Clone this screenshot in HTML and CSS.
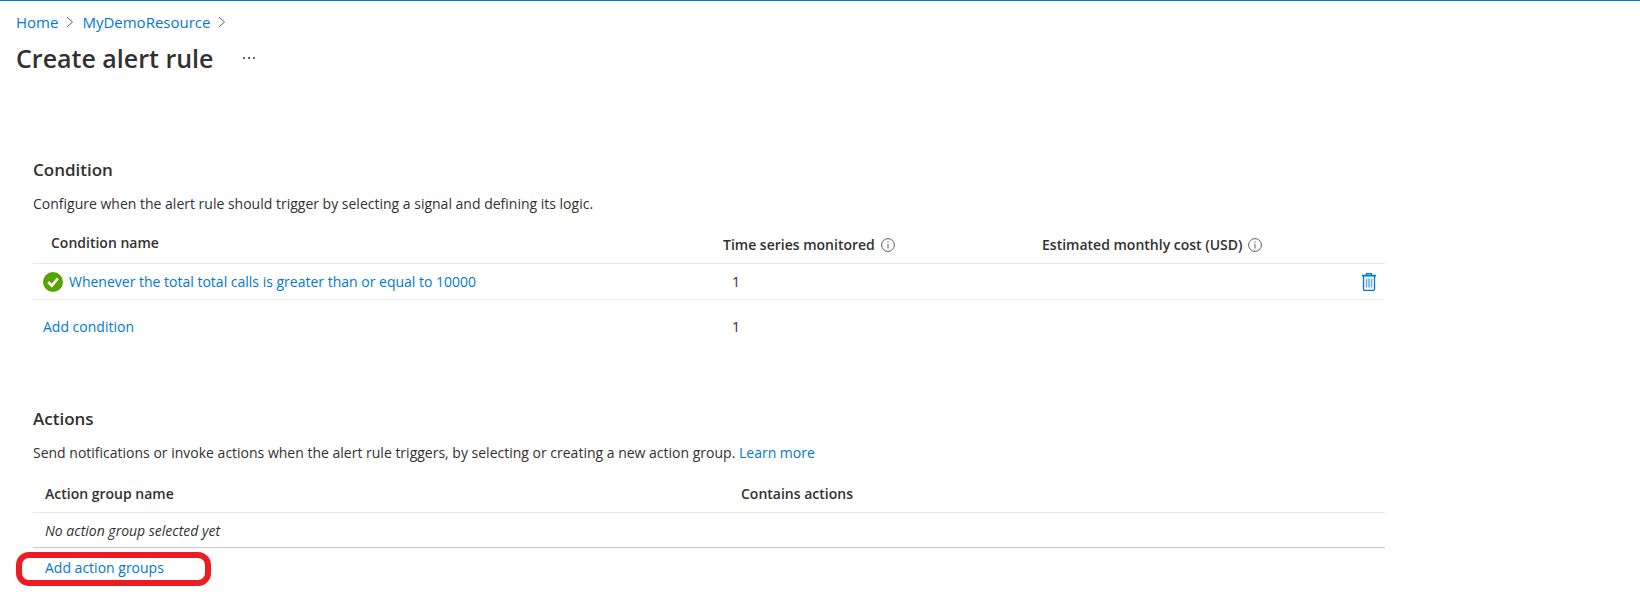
FILE: index.html
```html
<!DOCTYPE html>
<html lang="en">
<head>
<meta charset="utf-8">
<title>Create alert rule</title>
<meta name="viewport" content="width=device-width, initial-scale=1">
<link rel="stylesheet" href="styles.css">
</head>
<body>
<header class="page-header">
  <nav class="breadcrumb" aria-label="Breadcrumb">
    <a href="#">Home</a>
    <svg class="chevron" viewBox="0 0 8 12" aria-hidden="true"><path d="M1 1l5.5 5L1 11"/></svg>
    <a href="#">MyDemoResource</a>
    <svg class="chevron" viewBox="0 0 8 12" aria-hidden="true"><path d="M1 1l5.5 5L1 11"/></svg>
  </nav>
  <div class="title-row">
    <h1 class="title">Create alert rule</h1>
    <button class="icon-button" type="button" aria-label="More options">
      <svg class="more" viewBox="0 0 14 4" aria-hidden="true"><circle cx="2" cy="2" r="1"/><circle cx="7" cy="2" r="1"/><circle cx="12" cy="2" r="1"/></svg>
    </button>
  </div>
</header>
<main class="content">
  <section class="section">
    <h2 class="section-title">Condition</h2>
    <p class="description">Configure when the alert rule should trigger by selecting a signal and defining its logic.</p>
    <table class="grid conditions">
      <colgroup><col class="col-name"><col class="col-series"><col class="col-cost"><col class="col-delete"></colgroup>
      <thead>
        <tr>
          <th scope="col">Condition name</th>
          <th scope="col"><span class="label">Time series monitored <svg class="info" viewBox="0 0 14 14" role="img" aria-label="Info"><circle cx="7" cy="7" r="6.4"/><path d="M7 6v4.5M7 3.6v1.2"/></svg></span></th>
          <th scope="col"><span class="label">Estimated monthly cost (USD) <svg class="info" viewBox="0 0 14 14" role="img" aria-label="Info"><circle cx="7" cy="7" r="6.4"/><path d="M7 6v4.5M7 3.6v1.2"/></svg></span></th>
          <td></td>
        </tr>
      </thead>
      <tbody>
        <tr>
          <td><span class="condition"><svg class="status" viewBox="0 0 20 20" aria-hidden="true"><circle cx="10" cy="10" r="10"/><path d="M5.2 10l3.6 3.7 6-7.2"/></svg><a href="#">Whenever the total total calls is greater than or equal to 10000</a></span></td>
          <td>1</td>
          <td></td>
          <td><button class="icon-button" type="button" aria-label="Delete condition">
            <svg class="trash" viewBox="0 0 16 18" aria-hidden="true"><path class="halo" d="M1 3.5h14"/><path d="M1 2.5h14M5.5 2.500V.5h5v2M2.500 3v13q0 1.500 1.500 1.500h8q1.500 0 1.500-1.500V3"/><path class="bars" d="M5.500 5.500v9M8 5.500v9M10.500 5.500v9"/></svg>
          </button></td>
        </tr>
      </tbody>
      <tfoot>
        <tr>
          <td><button class="link-button" type="button">Add condition</button></td>
          <td>1</td>
          <td></td>
          <td></td>
        </tr>
      </tfoot>
    </table>
  </section>
  <section class="section">
    <h2 class="section-title">Actions</h2>
    <p class="description">Send notifications or invoke actions when the alert rule triggers, by selecting or creating a new action group. <a href="#">Learn more</a></p>
    <table class="grid actions">
      <colgroup><col class="col-group"><col></colgroup>
      <thead>
        <tr><th scope="col">Action group name</th><th scope="col">Contains actions</th></tr>
      </thead>
      <tbody>
        <tr><td colspan="2"><em>No action group selected yet</em></td></tr>
      </tbody>
    </table>
    <div class="highlight"><button class="link-button" type="button">Add action groups</button></div>
  </section>
</main>
</body>
</html>
```
FILE: styles.css
```css
* { box-sizing: border-box; }

body {
  margin: 0;
  border-top: 1px solid #0078d4;
  background: #fff;
  color: #323130;
  font: 14px/20px "Open Sans", "Noto Sans", sans-serif;
}

a, .link-button { color: #0078d4; text-decoration: none; }
a:hover, .link-button:hover { text-decoration: underline; }

button {
  padding: 0;
  border: 0;
  background: none;
  font: inherit;
  cursor: pointer;
}
.icon-button { display: block; }

svg { display: block; flex: none; fill: none; }

.page-header { padding: 11px 16px 0; }

.breadcrumb { display: flex; align-items: center; gap: 8px; font-size: 15px; }
.chevron { width: 8px; height: 12px; stroke: #605e5c; }

.title-row { display: flex; align-items: center; gap: 29px; padding-top: 9px; }
.title { margin: 0; font-size: 25px; line-height: 34px; font-weight: 600; }
.more { width: 14px; height: 4px; fill: #323130; }

.content { max-width: 1385px; padding: 83px 0 32px 33px; }
.section + .section { margin-top: 53px; }
.section-title { margin: 0; font-size: 17px; line-height: 24px; font-weight: 600; }
.description { margin: 12px 0 0; }

.grid { width: 100%; border-collapse: separate; border-spacing: 0; table-layout: fixed; }
.grid th { font-weight: 600; text-align: left; }
.grid th, .grid td { padding: 0; vertical-align: middle; }

.conditions { margin-top: 10px; }
.conditions .col-name { width: 681px; }
.conditions .col-series { width: 319px; }
.conditions .col-delete { width: 30px; }
.conditions thead tr { height: 40px; }
.conditions tbody tr { height: 36px; }
.conditions tfoot tr { height: 54px; }
.conditions thead > tr > * { border-bottom: 1px solid #e8e8e8; }
.conditions tbody td { padding-top: 1px; border-bottom: 1px solid #f0f0f0; }
.conditions th { padding-top: 2px; padding-left: 9px; }
.conditions th:first-child { padding-top: 0; padding-bottom: 2px; padding-left: 18px; }
.conditions td:first-child { padding-left: 10px; }
.conditions td:nth-child(2) { padding-left: 18px; }

.label { display: flex; align-items: center; gap: 6px; }
.info { width: 14px; height: 14px; stroke: #605e5c; }
.condition { display: flex; align-items: center; gap: 6px; }
.status { width: 20px; height: 20px; }
.status circle { fill: #57a300; }
.status path { stroke: #fff; stroke-width: 2.6; }
.trash { width: 16px; height: 18px; margin-left: 6px; stroke: #0078d4; stroke-width: 1.3; }
.trash .halo { stroke: #9dccf0; }
.trash .bars { stroke: #6cb0e6; stroke-width: 1.6; }

.actions { margin-top: 13px; }
.actions .col-group { width: 696px; }
.actions thead tr { height: 37px; }
.actions tbody tr { height: 35px; }
.actions th { border-bottom: 1px solid #e8e8e8; }
.actions tbody td { padding-top: 2px; border-bottom: 1px solid #c8c8c8; }
.actions th, .actions td { padding-left: 12px; }

.highlight {
  width: 195px;
  margin: 4px 0 0 -17px;
  padding: 0 0 2px 23px;
  border: 6px solid #ed1c24;
  border-radius: 13px;
}
.highlight .link-button { display: block; }
```
